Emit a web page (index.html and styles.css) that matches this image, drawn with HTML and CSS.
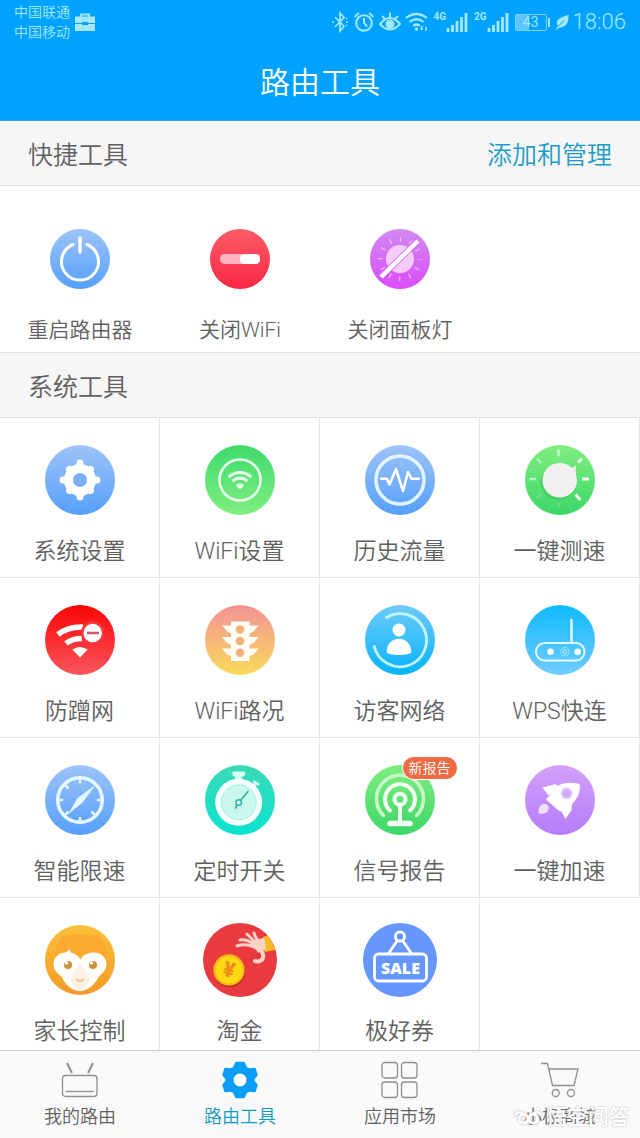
FILE: index.html
```
<!DOCTYPE html>
<html lang="zh-CN">
<head>
    <meta charset="UTF-8">
    <meta name="viewport" content="width=device-width, initial-scale=1.0">
    <title>路由工具</title>
    <link rel="stylesheet" href="styles.css">
</head>
<body>
    <!-- 图标渐变 -->
    <svg class="defs" width="0" height="0" aria-hidden="true">
        <defs>
            <linearGradient id="blue" x2="0" y2="1"><stop offset="0" stop-color="#9cc3f8"/><stop offset="1" stop-color="#559ffb"/></linearGradient>
            <linearGradient id="red" x2="0" y2="1"><stop offset="0" stop-color="#fb5c66"/><stop offset="1" stop-color="#fb2745"/></linearGradient>
            <linearGradient id="pink" x2="0" y2="1"><stop offset="0" stop-color="#d08af0"/><stop offset="1" stop-color="#db4bfa"/></linearGradient>
            <linearGradient id="green" x2="0" y2="1"><stop offset="0" stop-color="#3edb6c"/><stop offset="1" stop-color="#80ef80"/></linearGradient>
            <linearGradient id="lime" x2="0" y2="1"><stop offset="0" stop-color="#80ee80"/><stop offset="1" stop-color="#3cd768"/></linearGradient>
            <linearGradient id="fire" x2="0" y2="1"><stop offset="0" stop-color="#fa0505"/><stop offset="1" stop-color="#f9555c"/></linearGradient>
            <linearGradient id="sunset" x2="0" y2="1"><stop offset="0" stop-color="#f39296"/><stop offset="1" stop-color="#fada5a"/></linearGradient>
            <linearGradient id="sky" x2="0" y2="1"><stop offset="0" stop-color="#6fcbf8"/><stop offset="1" stop-color="#06b3fa"/></linearGradient>
            <linearGradient id="aqua" x2="0" y2="1"><stop offset="0" stop-color="#10b9ff"/><stop offset="1" stop-color="#70ccfd"/></linearGradient>
            <linearGradient id="teal" x2="0" y2="1"><stop offset="0" stop-color="#3cd9b6"/><stop offset="1" stop-color="#0be3cf"/></linearGradient>
            <linearGradient id="purple" x2="0" y2="1"><stop offset="0" stop-color="#d3a0fb"/><stop offset="1" stop-color="#b57cf9"/></linearGradient>
            <linearGradient id="orange" x2="0" y2="1"><stop offset="0" stop-color="#fbc03a"/><stop offset="1" stop-color="#f39a26"/></linearGradient>
            <clipPath id="coinClip"><circle cx="40" cy="40" r="37"/></clipPath>
        </defs>
    </svg>

    <header class="header">
        <div class="status-bar">
            <div class="carriers">
                <div>中国联通</div>
                <div>中国移动</div>
            </div>
            <svg class="briefcase" width="22" height="20" viewBox="0 0 22 20">
                <path d="M7 5V2.500h8V5" fill="none" stroke="currentColor" stroke-width="2"/>
                <path d="M1 4.500h20V11h-7v-1H8v1H1zM1 12h7v1h6v-1h7v7H1z" fill="currentColor"/>
            </svg>
            <div class="status-icons">
                <svg width="18" height="22" viewBox="0 0 18 22" fill="none" stroke="currentColor" stroke-width="1.700">
                    <path d="M4 6l9 9.500L9 20V2l4 4.500L4 16"/>
                    <path d="M1 11h2M15 11h2M15 8l1-1M15 14l1 1"/>
                </svg>
                <svg width="22" height="22" viewBox="0 0 22 22" fill="none" stroke="currentColor" stroke-width="2">
                    <circle cx="11" cy="12" r="7.800"/>
                    <path d="M11 7v5l3 3.500M1.500 6L6 2M20.500 6L16 2"/>
                </svg>
                <svg width="22" height="22" viewBox="0 0 22 22" fill="none" stroke="currentColor" stroke-width="2">
                    <path d="M1 13q10-12 20 0q-10 11-20 0zM11 1.500v5M3 5l3 3M19 5l-3 3"/>
                    <circle cx="11" cy="13" r="3.500" fill="currentColor"/>
                </svg>
                <svg width="24" height="22" viewBox="0 0 24 22" fill="none" stroke="currentColor" stroke-width="2.200">
                    <path d="M1 7q10.500-8 21 0M4.500 11q7-5.500 14 0M8 15q3.500-3 7 0"/>
                    <path d="M10 18h3" stroke-width="3"/>
                    <path d="M17 15v4M21 16v4M16 17l1 2M22 17l-1 0" stroke-width="1.500"/>
                </svg>
                <div class="signal">
                    <span class="net">4G</span>
                    <svg width="22" height="20" viewBox="0 0 22 20" stroke="currentColor" stroke-width="2.800">
                        <path d="M2 16v4M6.500 13v7M11 9v11M15.500 5v15M20 1v19"/>
                    </svg>
                </div>
                <div class="signal">
                    <span class="net">2G</span>
                    <svg width="22" height="20" viewBox="0 0 22 20" stroke="currentColor" stroke-width="2.800">
                        <path d="M2 16v4M6.500 13v7M11 9v11M15.500 5v15M20 1v19"/>
                    </svg>
                </div>
                <div class="battery">43</div>
                <svg width="14" height="20" viewBox="0 0 14 20">
                    <path d="M13.500 3C14 13 9 16 4 15.500L1.500 18 1 17l2-3C-1 7 7 5 13.500 3z" fill="currentColor"/>
                    <path d="M3.500 14L9 8.500" stroke="#00a2ff"/>
                </svg>
                <div class="clock">18:06</div>
            </div>
        </div>
        <h1 class="title">路由工具</h1>
    </header>

    <main class="content">
        <div class="section-head">
            <h2 class="section-title">快捷工具</h2>
            <a class="section-link" href="#">添加和管理</a>
        </div>
        <div class="quick-grid">
            <button class="quick-item">
                <svg class="icon" viewBox="0 0 80 80" fill="none" stroke="#fff" stroke-linecap="round">
                    <circle cx="40" cy="40" r="30" fill="url(#blue)" stroke="none"/>
                    <path d="M33 25.500a18.500 18.500 0 1 0 14 0" stroke-width="3"/>
                    <path d="M40 19v14" stroke-width="3.500"/>
                </svg>
                <span>重启路由器</span>
            </button>
            <button class="quick-item">
                <svg class="icon" viewBox="0 0 80 80">
                    <circle cx="40" cy="40" r="30" fill="url(#red)"/>
                    <rect x="20" y="35" width="40" height="10" rx="4.500" fill="#ffb3c0"/>
                    <rect x="40" y="35" width="20" height="10" rx="4.500" fill="#fff"/>
                </svg>
                <span>关闭WiFi</span>
            </button>
            <button class="quick-item">
                <svg class="icon" viewBox="0 0 80 80" stroke="#f3b8f5">
                    <circle cx="40" cy="40" r="30" fill="url(#pink)" stroke="none"/>
                    <circle cx="40" cy="40" r="19.500" fill="none" stroke-width="5" stroke-dasharray="1.200 9.010" stroke-dashoffset=".6"/>
                    <circle cx="40" cy="40" r="14" fill="#f4ccfb" stroke="none"/>
                    <path d="M21 58L58 22" stroke="#d765f2" stroke-width="6"/>
                    <path d="M21 58L58 22" stroke="#fff" stroke-width="4.500"/>
                </svg>
                <span>关闭面板灯</span>
            </button>
        </div>

        <div class="section-head">
            <h2 class="section-title">系统工具</h2>
        </div>
        <div class="tool-grid">
            <button class="tool-item">
                <svg class="icon" viewBox="0 0 80 80">
                    <circle cx="40" cy="40" r="35" fill="url(#blue)"/>
                    <g stroke="#fff" stroke-width="7" stroke-linecap="round">
                        <path d="M40 23v34M23 40h34"/>
                        <path d="M29.500 29.500l21 21M50.500 29.500l-21 21"/>
                    </g>
                    <circle cx="40" cy="40" r="11.500" fill="none" stroke="#fff" stroke-width="9"/>
                    <circle cx="40" cy="40" r="7" fill="#78aff9"/>
                </svg>
                <span>系统设置</span>
            </button>
            <button class="tool-item">
                <svg class="icon" viewBox="0 0 80 80" fill="none" stroke="#eafff0">
                    <circle cx="40" cy="40" r="35" fill="url(#green)" stroke="none"/>
                    <circle cx="40" cy="40" r="20.500" stroke-width="2.500"/>
                    <path d="M28.500 37q11.500-9 23 0M32.500 41q7.500-6 15 0" stroke-width="3"/>
                    <path d="M37 45.500q3-2.500 6 0l-3 2.500z" fill="#eafff0" stroke-width="2" stroke-linejoin="round"/>
                </svg>
                <span>WiFi设置</span>
            </button>
            <button class="tool-item">
                <svg class="icon" viewBox="0 0 80 80" fill="none" stroke-linejoin="round" stroke-linecap="round">
                    <circle cx="40" cy="40" r="35" fill="url(#blue)"/>
                    <circle cx="40" cy="40" r="24" stroke="#dff6ff" stroke-width="3.500"/>
                    <path d="M21 38.700h6l2.500 6L36 29l7 22 5-19 3.500 6.700H59" stroke="#fff" stroke-width="2.500"/>
                </svg>
                <span>历史流量</span>
            </button>
            <button class="tool-item">
                <svg class="icon" viewBox="0 0 80 80">
                    <circle cx="40" cy="40" r="35" fill="url(#lime)"/>
                    <g stroke="#fff" stroke-width="3">
                        <path d="M38.500 9.500V16" stroke="#c8fbd0" stroke-width="2.500"/>
                        <path d="M58 22.500l4-4M62 39h7M55.500 54.500l5 5.500" stroke="#f2fff4"/>
                        <path d="M17 18.500l4 4.500M9.500 39H16" stroke="#b5f8bf" stroke-width="2.500"/>
                        <path d="M17 58l4-4M38.500 63v4" stroke="#6fe38c" stroke-width="2"/>
                    </g>
                    <circle cx="38" cy="42.500" r="17.500" fill="#35bd5c" opacity=".5"/>
                    <circle cx="39.700" cy="40.300" r="17.300" fill="#f0f0f1"/>
                    <path d="M48 28.500q4.500 0 8.500-3.500-1.500 5-.5 9z" fill="#f0f0f1"/>
                </svg>
                <span>一键测速</span>
            </button>

            <button class="tool-item">
                <svg class="icon" viewBox="0 0 80 80" fill="none" stroke="#fff">
                    <circle cx="40" cy="40" r="35" fill="url(#fire)" stroke="none"/>
                    <path d="M18 34.500Q28 26.500 43 27M26 43.500q6-5 16-5" stroke-width="5.500"/>
                    <path d="M32.300 49.500q7.700-5 15.400 0L40 57.500z" fill="#fff" stroke="none"/>
                    <circle cx="52.700" cy="33" r="10.500" fill="#fff" stroke="#f7373b" stroke-width="2.500"/>
                    <path d="M47 33h12" stroke="#c95a70" stroke-width="2.500"/>
                </svg>
                <span>防蹭网</span>
            </button>
            <button class="tool-item">
                <svg class="icon" viewBox="0 0 80 80">
                    <circle cx="40" cy="40" r="35" fill="url(#sunset)"/>
                    <path d="M31 21.500h18.500v4h9l-5 6-4 2v3.500h9l-5 6-4 2v3.500h9l-5 6-4 1.500V61H31v-5l-4-1.500-5-6h9V45l-4-2-5-6h9v-3.500l-4-2-5-6h9z" fill="#fffdf6"/>
                    <g fill="#f5b17c"><circle cx="40" cy="29.500" r="4.300"/><circle cx="40" cy="41" r="4.300"/><circle cx="40" cy="52.700" r="4.300"/></g>
                </svg>
                <span>WiFi路况</span>
            </button>
            <button class="tool-item">
                <svg class="icon" viewBox="0 0 80 80">
                    <circle cx="40" cy="40" r="35" fill="url(#sky)"/>
                    <path d="M26.500 17.500A26.500 26.500 0 1 1 14.300 46.500" fill="none" stroke="#c5f5ff" stroke-width="2.800" stroke-linecap="round"/>
                    <circle cx="39" cy="30" r="6.500" fill="#fff"/>
                    <path d="M26.700 52c0-8 5.300-13.300 12.300-13.300S51.300 44 51.300 52c0 4-24.600 4-24.600 0z" fill="#fff"/>
                </svg>
                <span>访客网络</span>
            </button>
            <button class="tool-item">
                <svg class="icon" viewBox="0 0 80 80" fill="none" stroke="#e2f9ff">
                    <circle cx="40" cy="40" r="35" fill="url(#aqua)" stroke="none"/>
                    <rect x="16" y="43" width="48.500" height="17.500" rx="8.700" stroke-width="2"/>
                    <path d="M51.500 20v23" stroke-width="2.500" stroke-linecap="round"/>
                    <circle cx="30.500" cy="51.700" r="3.200" fill="#fff" stroke="none"/>
                    <circle cx="57.700" cy="51.700" r="3.200" fill="#fff" stroke="none"/>
                    <circle cx="45" cy="51.700" r="4.200" stroke="#a0e4ff"/>
                    <circle cx="45" cy="51.700" r="1.800" stroke-width=".8"/>
                </svg>
                <span>WPS快连</span>
            </button>

            <button class="tool-item">
                <svg class="icon" viewBox="0 0 80 80" fill="none" stroke="#e6f8ff">
                    <circle cx="40" cy="40" r="35" fill="url(#blue)" stroke="none"/>
                    <circle cx="40" cy="40" r="22.300" stroke-width="3.500"/>
                    <path d="M40 19v4M40 57v4M19 40h4M57 40h4M25.500 25.500l3 3M51.500 51.500l3 3M25.500 54.500l3-3" stroke-width="2.500"/>
                    <path d="M55.500 25L42.500 42.500 28 54.500 37.500 38z" fill="#e6f8ff" stroke="none"/>
                </svg>
                <span>智能限速</span>
            </button>
            <button class="tool-item">
                <svg class="icon" viewBox="0 0 80 80">
                    <circle cx="40" cy="40" r="35" fill="url(#teal)"/>
                    <path d="M32.500 11.500H45v4l-3 1.500v4h-7v-4l-2.500-1.500zM54 20l6 4-1.500 2-2-1-2.500 3-3-2 3-3-1-1z" fill="#d8fff5"/>
                    <circle cx="38.700" cy="42.300" r="23.500" fill="#f6fffd"/>
                    <circle cx="38.700" cy="42.300" r="17.500" fill="#c9f8ee" stroke="#a9efe2"/>
                    <path d="M48 31.500l-7.500 9M37.300 45l-1.800 3" stroke="#35b5a5" stroke-width="1.800" stroke-linecap="round"/>
                    <circle cx="38.700" cy="42.500" r="2.800" fill="none" stroke="#35b5a5" stroke-width="1.500"/>
                </svg>
                <span>定时开关</span>
            </button>
            <button class="tool-item">
                <svg class="icon" viewBox="0 0 80 80" fill="none" stroke="#f4fff4" stroke-width="4" stroke-linecap="round">
                    <circle cx="40" cy="40" r="35" fill="url(#lime)" stroke="none"/>
                    <path d="M23.500 55.500a23.500 23.500 0 1 1 33 0" stroke="#c8f8c8" stroke-width="3.500"/>
                    <path d="M30 50.500a15 15 0 1 1 20 0"/>
                    <circle cx="40" cy="39.300" r="5.500"/>
                    <path d="M40 45v18"/>
                    <path d="M30 63.500h20" stroke-width="5.500"/>
                </svg>
                <em class="badge">新报告</em>
                <span>信号报告</span>
            </button>
            <button class="tool-item">
                <svg class="icon" viewBox="0 0 80 80" fill="#fff">
                    <circle cx="40" cy="40" r="35" fill="url(#purple)"/>
                    <path d="M58 23.500q2 0 2 2.500c0 8-3 13-8 18l-4.500 3-7 4.500q-4-2-7-5.500L26 39.500 30 35l4-7c6-5 15-6.500 24-4.500z"/>
                    <path d="M22.500 27.500L35.500 24l3 3-10 8.500zM52 42l-.5 8-6 9-5.500-10z"/>
                    <path d="M18.500 53.500c-.5-6 2-9.500 5.500-9.500 3.500 0 5.500 2 4.500 5.500-1.500 4.500-6 4.500-10 4z" fill="#f1e0fe"/>
                    <circle cx="46.700" cy="33.300" r="4.800" fill="#cfacfb" stroke="#e0c4fd" stroke-width="2"/>
                </svg>
                <span>一键加速</span>
            </button>

            <button class="tool-item">
                <svg class="icon" viewBox="0 0 80 80">
                    <circle cx="40" cy="40" r="35" fill="url(#orange)"/>
                    <path d="M15 38c0-10 3-17 8-22 10-3 24 0 36-1 4 4 8 12 7 24z" fill="#fba92f"/>
                    <path d="M13.500 44c0-7 6-11.500 12-11.500l4-3 1.500 3c4 1 7 3 9.500 7 3-5 7-7 13-7 7 0 13 4.500 13 11.500 0 6-4 9-8 13-4 8-11 14-18.500 14S25 65 22 57c-5-4-8.500-7-8.500-13z" fill="#fffefa"/>
                    <path d="M40 43l-10 16q4 10 10 10t10-10z" fill="#fdf0e3"/>
                    <path d="M36.500 59q3.500 5 7 0" fill="none" stroke="#e6a047" stroke-width="1.200"/>
                    <circle cx="28" cy="45" r="4" fill="#c9913a"/><circle cx="53" cy="45" r="4" fill="#c9913a"/>
                    <circle cx="26.500" cy="43" r="1.800" fill="#fff"/><circle cx="51.500" cy="43" r="1.800" fill="#fff"/>
                </svg>
                <span>家长控制</span>
            </button>
            <button class="tool-item">
                <svg class="icon" viewBox="0 0 80 80">
                    <circle cx="40" cy="40" r="37" fill="#e93a40"/>
                    <g clip-path="url(#coinClip)">
                        <path d="M63 17l6-2 10 14-14 3-4-6z" fill="#fbb829"/>
                    </g>
                    <g fill="none" stroke="#fbd3c4" stroke-width="3" stroke-linecap="round">
                        <path d="M37 26q8-3 18 1M40 20q6-1 14 4M47 14q3 3 8 8M54 13q1 4 4 8"/>
                        <path d="M54 22l9 1-2 7q5 8-1 11-3 1-5 0" stroke-width="4"/>
                    </g>
                    <path d="M51 22l8-3 5-1 2 11-5 2-3 2q-2-5-8-6z" fill="#fbd3c4"/>
                    <circle cx="29.500" cy="51.500" r="15.700" fill="#b52a24"/>
                    <circle cx="29" cy="50" r="15.700" fill="#f8b815"/>
                    <circle cx="29" cy="50" r="13.500" fill="#ffd814"/>
                    <text class="coin-mark" x="29" y="57" transform="rotate(15 29 50)">¥</text>
                </svg>
                <span>淘金</span>
            </button>
            <button class="tool-item">
                <svg class="icon" viewBox="0 0 80 80" fill="none" stroke="#fff" stroke-width="2.800">
                    <circle cx="40" cy="40" r="37" fill="#6697fd" stroke="none"/>
                    <rect x="14.500" y="34" width="52" height="27" rx="4"/>
                    <circle cx="40" cy="16.500" r="4.600"/>
                    <path d="M37.500 20.500l-9 13M42.500 20.500l9 13"/>
                    <text class="sale-mark" x="40.500" y="54">SALE</text>
                </svg>
                <span>极好券</span>
            </button>
        </div>
    </main>

    <nav class="tab-bar">
        <a class="tab" href="#">
            <svg class="tab-icon" viewBox="0 0 40 40">
                <rect x="2.500" y="15.500" width="34.500" height="21" rx="3"/>
                <path d="M6 31.500h28"/>
                <path d="M7 3l5 10M33 3l-5 10" stroke-width="2"/>
            </svg>
            <span>我的路由</span>
        </a>
        <a class="tab active" href="#">
            <svg class="tab-icon" viewBox="0 0 40 40">
                <path d="M16 2.500h8l2.500 5 3 1.500 5.500-.5 2 6.500-3 4v2l3 4-2 6.500-5.500-.5-3 1.500-2.500 5h-8l-2.500-5-3-1.500-5.500.5-2-6.500 3-4v-2l-3-4 2-6.500 5.500.5 3-1.500z" fill="#0a9df5" stroke="#0a9df5" stroke-linejoin="round"/>
                <circle cx="20" cy="20" r="6.500" fill="#fff" stroke="none"/>
            </svg>
            <span>路由工具</span>
        </a>
        <a class="tab" href="#">
            <svg class="tab-icon" viewBox="0 0 40 40">
                <rect x="2" y="2.500" width="15.500" height="15.500" rx="3"/>
                <rect x="21.500" y="2.500" width="15.500" height="15.500" rx="3"/>
                <rect x="2" y="22" width="15.500" height="15.500" rx="3"/>
                <rect x="21.500" y="22" width="15.500" height="15.500" rx="3"/>
            </svg>
            <span>应用市场</span>
        </a>
        <a class="tab" href="#">
            <svg class="tab-icon" viewBox="0 0 40 40">
                <path d="M1 3.500h6.500L12.500 25.500H34L38 9H9"/>
                <circle cx="15.700" cy="33" r="3.500"/>
                <circle cx="31" cy="33" r="3.500"/>
            </svg>
            <span>小极商城</span>
        </a>
        <div class="watermark">
            <svg width="28" height="20" viewBox="0 0 32 20" fill="none" stroke="#fff" stroke-width="3">
                <path d="M1 8q5-7 11 0M20 8q6-7 11 0"/>
                <circle cx="11" cy="12" r="5"/>
                <circle cx="22" cy="12" r="5"/>
            </svg>
            <span>悟空问答</span>
        </div>
    </nav>
</body>
</html>
```
FILE: styles.css
```
* {
    margin: 0;
    padding: 0;
    box-sizing: border-box;
}

body {
    display: flex;
    flex-direction: column;
    height: 100vh;
    font-family: Roboto, "Noto Sans CJK SC", sans-serif;
    font-weight: 350;
    background: #fff;
    color: #606060;
}

button {
    border: none;
    background: none;
    font: inherit;
    color: inherit;
}

a {
    color: inherit;
    text-decoration: none;
}

svg {
    display: block;
    flex: none;
}

.defs {
    position: absolute;
}

/* 顶部 */
.header {
    flex: none;
    background: #00a2ff;
    border-bottom: 1px solid #2aa5cf;
    color: #fff;
}

.status-bar {
    display: flex;
    align-items: center;
    height: 44px;
    padding: 0 14px;
    color: #a4e8ff;
}

.carriers {
    font-size: 14px;
    line-height: 20px;
}

.briefcase {
    margin-left: 4px;
}

.status-icons {
    display: flex;
    align-items: center;
    gap: 4px;
    margin-left: auto;
}

.signal {
    display: flex;
    margin-right: 2px;
}

.net {
    font-size: 10px;
    font-weight: 700;
    line-height: 10px;
}

.battery {
    position: relative;
    width: 32px;
    height: 17px;
    margin-right: 4px;
    border: 1px solid #7fd3ff;
    border-radius: 2px;
    background: linear-gradient(to right, #5cc4ff 43%, transparent 43%);
    font-size: 14px;
    font-weight: 400;
    line-height: 15px;
    text-align: center;
}

.battery::after {
    content: "";
    position: absolute;
    top: 3px;
    right: -4px;
    width: 2px;
    height: 9px;
    background: #a4e8ff;
}

.clock {
    font-size: 22px;
    line-height: 24px;
}

.title {
    padding-top: 2px;
    font-size: 30px;
    font-weight: 350;
    line-height: 74px;
    text-align: center;
}

/* 内容 */
.content {
    flex: 1;
    min-height: 0;
    overflow-y: auto;
    scrollbar-width: none;
}

.section-head {
    display: flex;
    justify-content: space-between;
    align-items: center;
    height: 65px;
    padding: 0 28px;
    border-bottom: 1px solid #e3e3e3;
    background: #f6f6f6;
}

.section-title {
    font-size: 25px;
    font-weight: 350;
}

.section-link {
    font-size: 25px;
    color: #1b9cc6;
}

.quick-grid {
    display: grid;
    grid-template-columns: repeat(4, 1fr);
    border-bottom: 1px solid #e3e3e3;
}

.quick-item {
    display: flex;
    flex-direction: column;
    align-items: center;
    gap: 15px;
    padding: 33px 0 6px;
    font-size: 21px;
    line-height: 32px;
}

.tool-grid {
    display: grid;
    grid-template-columns: repeat(4, 1fr);
}

.tool-item {
    position: relative;
    display: flex;
    flex-direction: column;
    align-items: center;
    gap: 16px;
    padding: 22px 0 9px;
    border-right: 1px solid #e6e6e6;
    border-bottom: 1px solid #e6e6e6;
    font-size: 23px;
    line-height: 32px;
}

.icon {
    width: 80px;
    height: 80px;
}

.badge {
    position: absolute;
    top: 18px;
    left: 50%;
    margin-left: 2px;
    padding: 0 6px;
    border: 1px solid #fff;
    border-radius: 12px;
    background: #ec6a44;
    color: #fff;
    font-size: 14px;
    font-style: normal;
    line-height: 22px;
    white-space: nowrap;
}

.coin-mark {
    fill: #f08a1c;
    font-size: 21px;
    font-weight: 900;
    text-anchor: middle;
}

.sale-mark {
    fill: #fff;
    stroke: none;
    font-family: "Noto Sans", sans-serif;
    font-size: 16px;
    font-weight: 900;
    text-anchor: middle;
}

/* 底部导航 */
.tab-bar {
    position: relative;
    display: grid;
    grid-template-columns: repeat(4, 1fr);
    flex: none;
    border-top: 1px solid #d0d0d0;
    background: #fafafa;
}

.tab {
    display: flex;
    flex-direction: column;
    align-items: center;
    gap: 5px;
    padding: 9px 0;
    font-size: 18px;
    line-height: 24px;
}

.tab.active {
    color: #1399c4;
}

.tab-icon {
    width: 40px;
    height: 40px;
    fill: none;
    stroke: #8f8f8f;
    stroke-width: 1.3px;
}

.watermark {
    position: absolute;
    right: 10px;
    bottom: 8px;
    display: flex;
    align-items: center;
    gap: 4px;
    color: #fff;
    font-size: 21px;
    font-weight: 500;
    line-height: 26px;
    text-shadow: 0 0 2px #aaa;
}

.watermark svg {
    filter: drop-shadow(0 0 1px #aaa);
}
```
